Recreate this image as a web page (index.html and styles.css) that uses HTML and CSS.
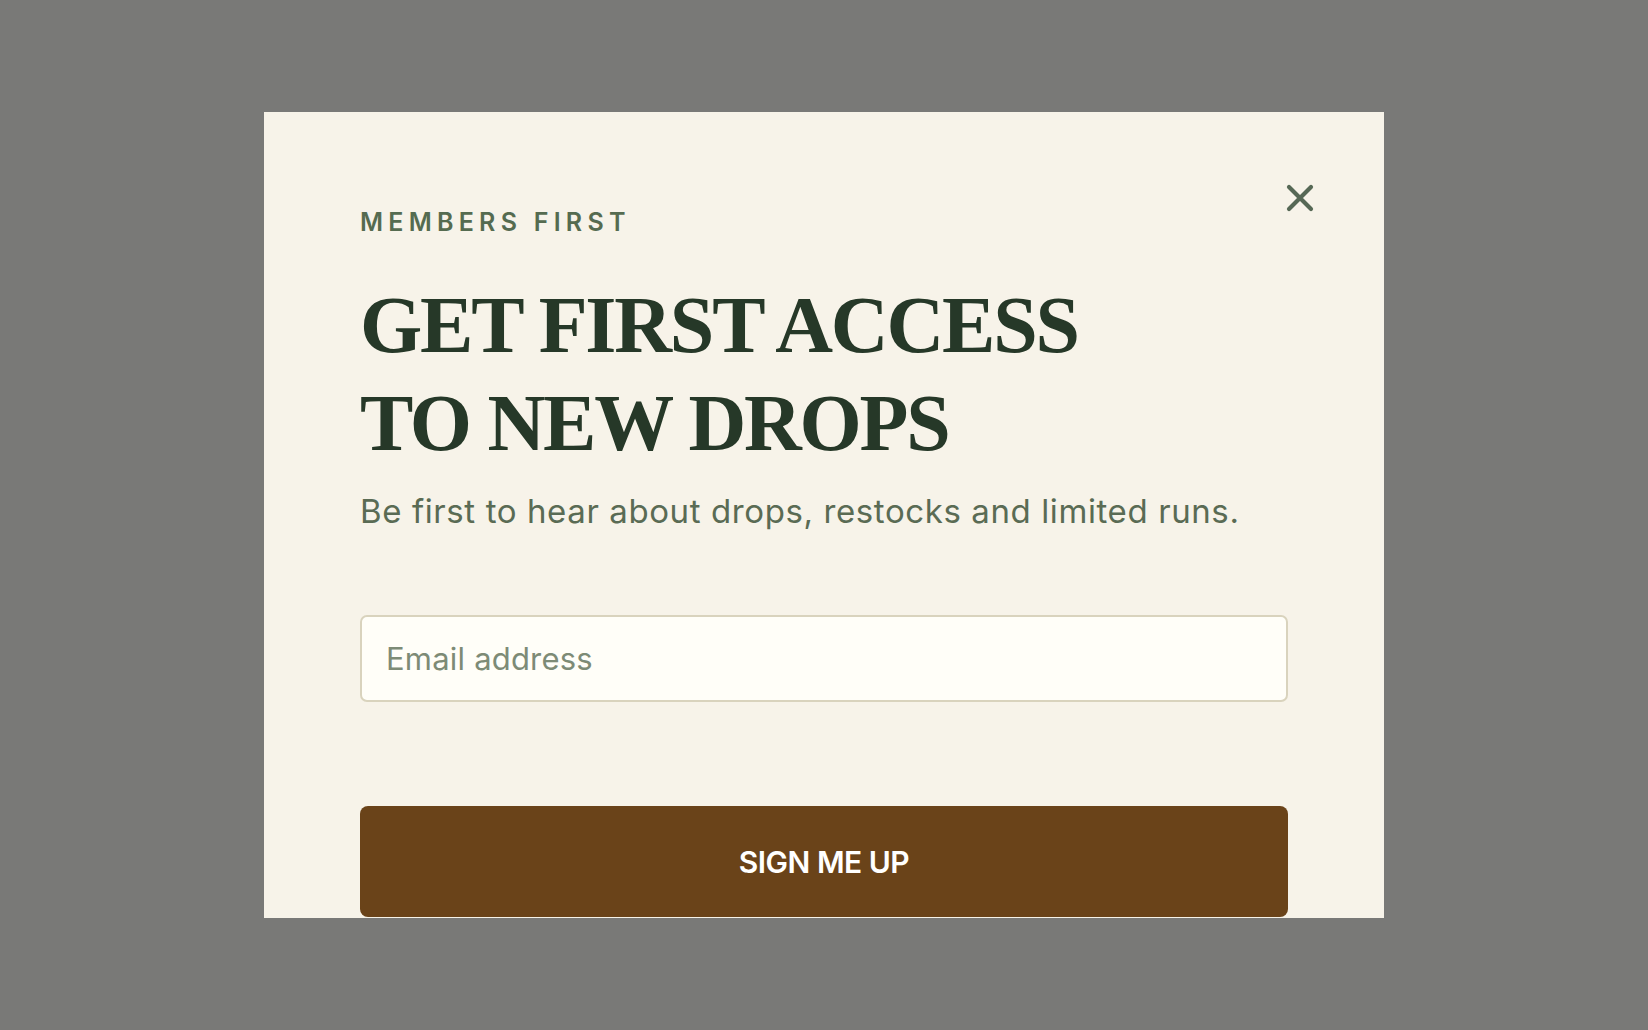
FILE: index.html
```html
<!DOCTYPE html>
<html lang="en">
<head>
    <meta charset="UTF-8">
    <meta name="viewport" content="width=device-width, initial-scale=1.0">
    <title>Members First</title>
    <link rel="stylesheet" href="styles.css">
</head>
<body>
    <div class="overlay">
        <div class="modal">
            <button class="close" type="button" aria-label="Close">
                <svg width="28" height="28" viewBox="0 0 28 28">
                    <path d="M3 3 L25 25 M25 3 L3 25" stroke="currentColor" stroke-width="4.2" stroke-linecap="round" fill="none"/>
                </svg>
            </button>
            <p class="eyebrow">MEMBERS FIRST</p>
            <h1 class="title">GET FIRST ACCESS<br>TO NEW DROPS</h1>
            <p class="lead">Be first to hear about drops, restocks and limited runs.</p>
            <form class="signup" onsubmit="event.preventDefault()">
                <input type="email" class="email" placeholder="Email address">
                <button type="submit" class="submit">SIGN ME UP</button>
            </form>
        </div>
    </div>
</body>
</html>
```

FILE: styles.css
```css
body {
    margin: 0;
    background-color: #797977;
    font-family: Inter, "Noto Sans", sans-serif;
}
.overlay {
    height: 100vh;
    display: flex;
    align-items: center;
    justify-content: center;
}
.modal {
    position: relative;
    box-sizing: border-box;
    width: 1120px;
    height: 806px;
    padding: 95px 96px 0 96px;
    background-color: #f7f3e9;
    overflow: hidden;
}
.close {
    position: absolute;
    top: 72px;
    right: 70px;
    padding: 0;
    border: none;
    background: none;
    color: #566855;
    cursor: pointer;
    line-height: 0;
}
.eyebrow {
    margin: 0;
    font-size: 25px;
    line-height: 30px;
    font-weight: 600;
    letter-spacing: 0.21em;
    color: #556b50;
}
.title {
    margin: 39px 0 0 0;
    font-family: "Liberation Serif", serif;
    font-size: 80px;
    line-height: 98px;
    font-weight: 700;
    letter-spacing: -2.2px;
    color: #263828;
}
.lead {
    margin: 19px 0 0 0;
    font-size: 33px;
    line-height: 40px;
    letter-spacing: 0.6px;
    color: #5a6b54;
}
.signup {
    margin-top: 84px;
    display: flex;
    flex-direction: column;
}
.email {
    box-sizing: border-box;
    width: 100%;
    height: 87px;
    padding: 0 24px;
    border: 2px solid #d9d3bd;
    border-radius: 7px;
    background-color: #fffef8;
    font-family: inherit;
    font-size: 31px;
    letter-spacing: 0.2px;
    color: #263828;
    outline: none;
}
.email::placeholder {
    color: #7d8b76;
}
.submit {
    margin-top: 104px;
    height: 111px;
    border: none;
    border-radius: 8px;
    background-color: #6a4319;
    color: #ffffff;
    font-family: inherit;
    font-size: 30px;
    font-weight: 600;
    letter-spacing: -0.5px;
    cursor: pointer;
}
```
